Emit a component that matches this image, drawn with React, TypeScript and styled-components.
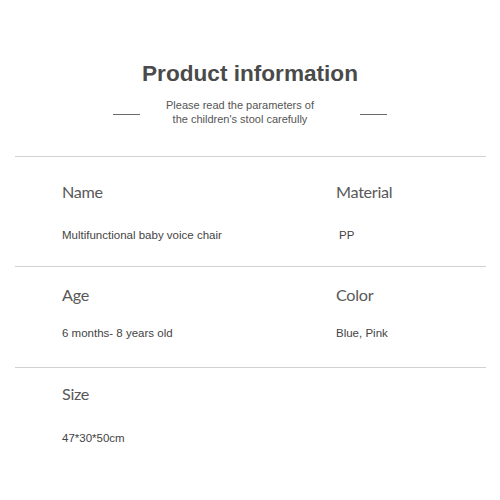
import React from 'react';
import styled, { createGlobalStyle } from 'styled-components';

const GlobalStyle = createGlobalStyle`
  html, body {
    margin: 0;
    padding: 0;
    background: #fff;
  }
`;

/* ── styled components ── */

const Page = styled.div`
  width: 500px;
  height: 500px;
  background: #fff;
  display: flex;
  flex-direction: column;
  overflow: hidden;
`;

const Header = styled.header`
  display: flex;
  flex-direction: column;
  align-items: center;
  padding-top: 60px;
  height: 97px;
  box-sizing: border-box;
`;

const Title = styled.h1`
  margin: 0;
  font-family: 'Liberation Sans', Arial, sans-serif;
  font-weight: 700;
  font-size: 22.6px;
  line-height: 28px;
  color: #4a4a4a;
`;

const SubRow = styled.div`
  display: flex;
  align-items: center;
  margin-top: 10px;
`;

const Dash = styled.span`
  display: block;
  width: 27px;
  height: 1px;
  background: #6a6a6a;
  margin-top: 5px;
`;

const Subtitle = styled.p<{ $left: number; $right: number }>`
  margin: 0 ${(p) => p.$right}px 0 ${(p) => p.$left}px;
  font-family: 'Liberation Sans', Arial, sans-serif;
  font-size: 11px;
  line-height: 14px;
  color: #555;
  text-align: center;
`;

const Table = styled.div`
  margin: 59px 14px 0 15px;
  display: flex;
  flex-direction: column;
`;

const Section = styled.section<{ $top: number; $bottom: number; $gap: number }>`
  display: grid;
  grid-template-columns: 274px 1fr;
  grid-template-rows: 20px 14px;
  row-gap: ${(p) => p.$gap}px;
  padding: ${(p) => p.$top}px 0 ${(p) => p.$bottom}px 47px;
  border-top: 1px solid #d2d2d2;
`;

const Label = styled.div`
  font-family: Lato, 'Open Sans', sans-serif;
  font-size: 16.2px;
  line-height: 20px;
  letter-spacing: -0.3px;
  color: #585858;
`;

const Value = styled.div<{ $indent?: number }>`
  font-family: 'Liberation Sans', Arial, sans-serif;
  font-size: 11.5px;
  line-height: 14px;
  color: #444;
  padding-left: ${(p) => p.$indent ?? 0}px;
`;

/* ── data ── */

type Field = { label: string; value: string; indent?: number };

const rows: { fields: Field[]; top: number; bottom: number; gap: number }[] = [
  {
    fields: [
      { label: 'Name', value: 'Multifunctional baby voice chair' },
      { label: 'Material', value: 'PP', indent: 3 },
    ],
    top: 25,
    bottom: 24,
    gap: 26,
  },
  {
    fields: [
      { label: 'Age', value: '6 months- 8 years old' },
      { label: 'Color', value: 'Blue, Pink' },
    ],
    top: 18,
    bottom: 27,
    gap: 21,
  },
  {
    fields: [{ label: 'Size', value: '47*30*50cm' }],
    top: 16,
    bottom: 0,
    gap: 27,
  },
];

/* ── component ── */

const App: React.FC = () => {
  return (
    <>
      <GlobalStyle />
      <Page>
        <Header>
          <Title>Product information</Title>
          <SubRow>
            <Dash />
            <Subtitle $left={26} $right={46}>
              Please read the parameters of
              <br />
              the children's stool carefully
            </Subtitle>
            <Dash />
          </SubRow>
        </Header>

        <Table>
          {rows.map((row, i) => (
            <Section key={i} $top={row.top} $bottom={row.bottom} $gap={row.gap}>
              {row.fields.map((f) => (
                <Label key={f.label}>{f.label}</Label>
              ))}
              {row.fields.length === 1 && <span />}
              {row.fields.map((f) => (
                <Value key={f.label} $indent={f.indent}>
                  {f.value}
                </Value>
              ))}
            </Section>
          ))}
        </Table>
      </Page>
    </>
  );
};

export default App;
